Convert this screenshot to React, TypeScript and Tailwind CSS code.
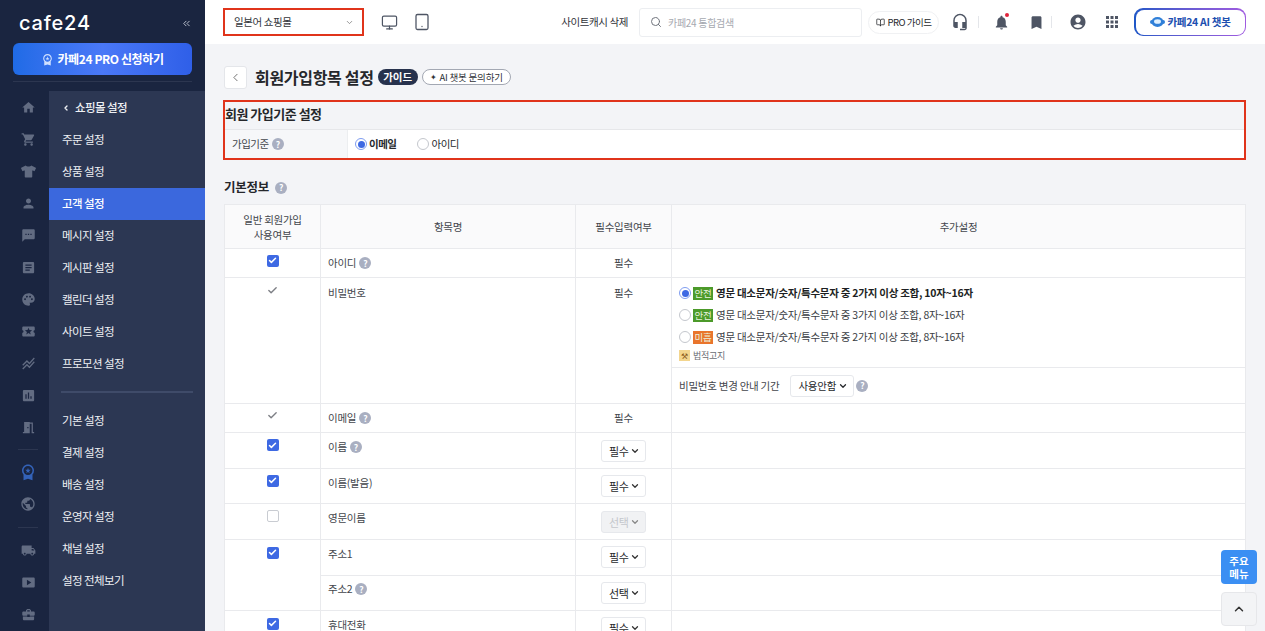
import React from "react";
import { MdHome, MdShoppingCart, MdPerson, MdSms, MdPalette, MdStackedLineChart, MdAssessment, MdLocalShipping, MdSmartDisplay, MdBusinessCenter, MdArticle, MdLocalActivity, MdMeetingRoom, MdNotifications, MdBookmark, MdAccountCircle, MdApps, MdHeadsetMic, MdPublic, MdWorkspacePremium } from "react-icons/md";
import { FaTshirt } from "react-icons/fa";
import { ChevronDown, ChevronLeft, ChevronUp, ChevronsLeft, Search, Check, Monitor, Tablet, BookOpen } from "lucide-react";

const font = "font-['Noto_Sans_CJK_KR','Noto_Sans',sans-serif]";

const Help = ({ className = "" }: { className?: string }) => (
  <span className={`inline-flex h-[12px] w-[12px] items-center justify-center rounded-full bg-[#a9afc1] text-[8.5px] font-bold leading-none text-white ${className}`}>?</span>
);

const CheckBox = ({ state }: { state: "on" | "off" | "fixed" }) => {
  if (state === "fixed") return <Check className="mx-auto h-[11px] w-[11px] text-[#7d7f85]" strokeWidth={3} />;
  if (state === "off") return <span className="mx-auto block h-[12px] w-[12px] rounded-[2px] border border-[#c9ccd2] bg-white" />;
  return (
    <span className="mx-auto flex h-[12px] w-[12px] items-center justify-center rounded-[2px] bg-[#3e69e3]">
      <Check className="h-[9px] w-[9px] text-white" strokeWidth={4} />
    </span>
  );
};

const Radio = ({ on }: { on?: boolean }) =>
  on ? (
    <span className="flex h-[12px] w-[12px] shrink-0 items-center justify-center rounded-full border border-[#7f9df0] bg-white">
      <span className="h-[7px] w-[7px] rounded-full bg-[#3e69e3]" />
    </span>
  ) : (
    <span className="block h-[12px] w-[12px] shrink-0 rounded-full border border-[#c4c7cd] bg-white" />
  );

const Sel = ({ label, disabled }: { label: string; disabled?: boolean }) => (
  <span className={`mx-auto flex h-[22px] w-[45px] items-center justify-between rounded-[3px] border border-[#e6e8ec] pl-[7px] pr-[5px] text-[11px] ${disabled ? "bg-[#f1f2f4] text-[#c4c7cc]" : "bg-white text-[#26282c]"}`}>
    {label}
    <ChevronDown className={`h-[10px] w-[10px] ${disabled ? "text-[#888]" : "text-[#333]"}`} strokeWidth={3} />
  </span>
);

const railTop = [MdHome, MdShoppingCart, FaTshirt, MdPerson, MdSms, MdArticle, MdPalette, MdLocalActivity, MdStackedLineChart, MdAssessment, MdMeetingRoom];
const railBottom = [MdLocalShipping, MdSmartDisplay, MdBusinessCenter];
const menu1 = ["주문 설정", "상품 설정", "고객 설정", "메시지 설정", "게시판 설정", "캘린더 설정", "사이트 설정", "프로모션 설정"];
const menu2 = ["기본 설정", "결제 설정", "배송 설정", "운영자 설정", "채널 설정", "설정 전체보기"];

const RailIcon = ({ I }: { I: React.ComponentType<{ className?: string }> }) => (
  <span className="flex h-[32px] w-full shrink-0 items-center justify-center"><I className="h-[15px] w-[15px] text-[#626c82]" /></span>
);

const Sidebar = () => (
  <aside className="flex h-full w-[205px] shrink-0 flex-col bg-[#1a2540]">
    <div className="flex h-[43px] shrink-0 items-center justify-between pl-[19px] pr-[13px] pt-[3px]">
      <span className="font-['Inter',sans-serif] text-[20px] font-medium leading-none tracking-[0.8px] text-white">cafe24</span>
      <ChevronsLeft className="h-[11px] w-[11px] text-[#c5cad6]" />
    </div>
    <div className="mx-[13px] flex h-[32px] shrink-0 items-center justify-center gap-[3px] rounded-[6px] bg-gradient-to-r from-[#1f6be6] via-[#4a78f7] to-[#2f5fe8] text-[12px] font-bold tracking-[-0.4px] text-white">
      <MdWorkspacePremium className="h-[13px] w-[13px] text-[#cfe0ff]" />
      카페24 PRO 신청하기
    </div>
    <div className="mx-[13px] mt-[6px] h-px shrink-0 bg-[#2c3650]" />
    <div className="mt-[9px] flex min-h-0 flex-1">
      <div className="flex w-[49px] shrink-0 flex-col items-center pl-[7px]">
        {railTop.map((I, i) => <RailIcon key={i} I={I} />)}
        <span className="mt-[6px] h-px w-[20px] shrink-0 bg-[#2c3650]" />
        <span className="mt-[6px] flex h-[32px] w-full shrink-0 items-center justify-center"><MdWorkspacePremium className="h-[18px] w-[18px] text-[#3362b8]" /></span>
        <span className="flex h-[32px] w-full shrink-0 items-center justify-center"><MdPublic className="h-[16px] w-[16px] text-[#626c82]" /></span>
        <span className="mb-[6px] mt-[7px] h-px w-[20px] shrink-0 bg-[#2c3650]" />
        {railBottom.map((I, i) => <RailIcon key={i} I={I} />)}
      </div>
      <nav className="flex-1 bg-[#2c3753] pt-[1px] text-[11.5px] tracking-[-0.6px] text-[#eef0f4]">
        <div className="flex h-[32px] items-center pl-[13px] font-medium">
          <ChevronLeft className="mr-[5px] h-[8px] w-[8px]" strokeWidth={4} />
          쇼핑몰 설정
        </div>
        {menu1.map((m) => (
          <div key={m} className={`flex h-[32px] items-center pl-[13px] ${m === "고객 설정" ? "bg-[#3b68dd] font-medium text-white" : ""}`}>{m}</div>
        ))}
        <div className="mx-[12px] mb-[12.5px] mt-[10.5px] h-[2px] bg-[#3f4b69]" />
        {menu2.map((m) => (
          <div key={m} className="flex h-[32px] items-center pl-[13px]">{m}</div>
        ))}
      </nav>
    </div>
  </aside>
);

const TopBar = () => (
  <header className="flex h-[44px] shrink-0 items-center bg-white pl-[18px] pr-[19px]">
    <div className="flex h-[28px] w-[141px] items-center justify-between border-2 border-[#e0341b] pl-[9px] pr-[8px] text-[10.5px] tracking-[-0.4px] text-[#33363b]">
      일본어 쇼핑몰
      <ChevronDown className="h-[9px] w-[9px] text-[#777]" />
    </div>
    <Monitor className="ml-[17px] h-[17px] w-[17px] text-[#4e5564]" strokeWidth={1.7} />
    <Tablet className="ml-[15px] h-[18px] w-[18px] text-[#4e5564]" strokeWidth={1.7} />
    <span className="ml-auto text-[10.5px] tracking-[-0.4px] text-[#2f3238]">사이트캐시 삭제</span>
    <div className="ml-[11px] flex h-[29px] w-[223px] items-center rounded-[3px] border border-[#eceef1] bg-white pl-[10px] text-[10px] tracking-[-0.3px] text-[#a6a9b0]">
      <Search className="mr-[6px] h-[12px] w-[12px] text-[#70747d]" />
      카페24 통합검색
    </div>
    <div className="ml-[6px] flex h-[23px] w-[71px] items-center justify-center gap-[3px] rounded-full border border-[#f0f1f3] text-[9.5px] tracking-[-0.5px] text-[#26282c]">
      <BookOpen className="h-[9px] w-[9px]" />
      PRO 가이드
    </div>
    <MdHeadsetMic className="ml-[12px] h-[18px] w-[18px] text-[#4e5564]" />
    <span className="ml-[9px] h-[12px] w-px bg-[#e4e6ea]" />
    <span className="relative ml-[14px]">
      <MdNotifications className="h-[17px] w-[17px] text-[#4e5564]" />
      <span className="absolute right-[1px] top-[-1px] h-[4px] w-[4px] rounded-full bg-[#e0243c]" />
    </span>
    <MdBookmark className="ml-[18px] h-[17px] w-[17px] text-[#4e5564]" />
    <span className="ml-[6px] h-[12px] w-px bg-[#e4e6ea]" />
    <MdAccountCircle className="ml-[17px] h-[18px] w-[18px] text-[#4e5564]" />
    <MdApps className="ml-[16px] h-[18px] w-[18px] text-[#4e5564]" />
    <div className="ml-[13px] rounded-[9px] bg-gradient-to-r from-[#1d57c7] to-[#a05be0] p-[1.5px]">
      <div className="flex h-[25px] w-[109px] items-center justify-center gap-[3px] rounded-[8px] bg-white text-[10.5px] font-bold tracking-[-0.3px] text-[#1d4fb0]">
        <svg width="15" height="12" viewBox="0 0 15 12"><ellipse cx="7.5" cy="6" rx="6" ry="5" fill="#2f7fd8" /><rect x="0" y="4" width="15" height="4" rx="2" fill="#2f7fd8" /><ellipse cx="7.5" cy="5.5" rx="3.5" ry="2.3" fill="#dff0ff" /></svg>
        카페24 AI 챗봇
      </div>
    </div>
  </header>
);

const td = "border border-[#e9eaed]";
const Name = ({ children, help }: { children: React.ReactNode; help?: boolean }) => (
  <span className="flex items-center gap-[3px]">{children}{help && <Help />}</span>
);

const PwOption = ({ on, tag, color, text }: { on?: boolean; tag: string; color: string; text: string }) => (
  <div className={`flex h-[22px] items-center gap-[2px] ${on ? "font-bold text-[#1d1f23]" : "text-[#3a3d43]"}`}>
    <Radio on={on} />
    <span className={`flex h-[13px] w-[20px] items-center justify-center text-[9.5px] font-normal text-[#e9f3df] ${color}`}>{tag}</span>
    <span className="ml-[1px]">{text}</span>
  </div>
);

const MainTable = () => (
  <table className="w-[1022px] table-fixed border-collapse bg-white text-[10.5px] tracking-[-0.25px] text-[#43464c]">
    <colgroup>
      <col className="w-[96px]" /><col className="w-[255px]" /><col className="w-[96px]" /><col />
    </colgroup>
    <thead>
      <tr className="h-[44px] bg-[#fafafb] text-center leading-[15px]">
        <th className={`${td} font-normal`}>일반 회원가입<br />사용여부</th>
        <th className={`${td} font-normal`}>항목명</th>
        <th className={`${td} font-normal`}>필수입력여부</th>
        <th className={`${td} font-normal`}>추가설정</th>
      </tr>
    </thead>
    <tbody>
      <tr className="h-[29px]">
        <td className={`${td} pb-[5px] text-center`}><CheckBox state="on" /></td>
        <td className={`${td} pl-[7px]`}><Name help>아이디</Name></td>
        <td className={`${td} text-center`}>필수</td>
        <td className={td} />
      </tr>
      <tr>
        <td className={`${td} pt-[7px] text-center align-top`}><CheckBox state="fixed" /></td>
        <td className={`${td} pl-[7px] pt-[7px] align-top`}>비밀번호</td>
        <td className={`${td} pt-[7px] text-center align-top`}>필수</td>
        <td className={`${td} p-0 align-top`}>
          <div className="flex h-[90px] flex-col border-b border-[#e9eaed] pl-[7px] pt-[4px]">
            <PwOption on tag="안전" color="bg-[#4c9a2a]" text="영문 대소문자/숫자/특수문자 중 2가지 이상 조합, 10자~16자" />
            <PwOption tag="안전" color="bg-[#4c9a2a]" text="영문 대소문자/숫자/특수문자 중 3가지 이상 조합, 8자~16자" />
            <PwOption tag="미흡" color="bg-[#e9752c]" text="영문 대소문자/숫자/특수문자 중 2가지 이상 조합, 8자~16자" />
            <div className="mt-[1px] flex items-center gap-[3px] text-[9px] text-[#6a6d73]">
              <span className="flex h-[11px] w-[11px] items-center justify-center bg-[#f3d58e] text-[8px] leading-none text-[#8a5a1a]">⚒</span>
              법적고지
            </div>
          </div>
          <div className="flex h-[35px] items-center pl-[7px]">
            비밀번호 변경 안내 기간
            <span className="ml-[11px] flex h-[22px] w-[64px] items-center justify-between rounded-[3px] border border-[#e6e8ec] pl-[7px] pr-[5px] text-[#26282c]">
              사용안함
              <ChevronDown className="h-[10px] w-[10px]" strokeWidth={3} />
            </span>
            <Help className="ml-[2px]" />
          </div>
        </td>
      </tr>
      <tr className="h-[29px]">
        <td className={`${td} pb-[5px] text-center`}><CheckBox state="fixed" /></td>
        <td className={`${td} pl-[7px]`}><Name help>이메일</Name></td>
        <td className={`${td} text-center`}>필수</td>
        <td className={td} />
      </tr>
      {[
        { s: "on", n: "이름", h: true, v: "필수" },
        { s: "on", n: "이름(발음)", v: "필수" },
        { s: "off", n: "영문이름", v: "선택", d: true },
      ].map((r) => (
        <tr key={r.n} className="h-[35.6px]">
          <td className={`${td} pb-[10px] text-center`}><CheckBox state={r.s as "on" | "off"} /></td>
          <td className={`${td} pb-[7px] pl-[7px]`}><Name help={r.h}>{r.n}</Name></td>
          <td className={`${td} pt-[1px] text-center`}><Sel label={r.v} disabled={r.d} /></td>
          <td className={td} />
        </tr>
      ))}
      <tr className="h-[36px]">
        <td rowSpan={2} className={`${td} pt-[7px] text-center align-top`}><CheckBox state="on" /></td>
        <td className={`${td} pb-[7px] pl-[7px]`}>주소1</td>
        <td className={`${td} text-center`}><Sel label="필수" /></td>
        <td className={td} />
      </tr>
      <tr className="h-[35px]">
        <td className={`${td} pb-[7px] pl-[7px]`}><Name help>주소2</Name></td>
        <td className={`${td} text-center`}><Sel label="선택" /></td>
        <td className={td} />
      </tr>
      <tr className="h-[36px]">
        <td className={`${td} pb-[9px] text-center`}><CheckBox state="on" /></td>
        <td className={`${td} pb-[7px] pl-[7px]`}>휴대전화</td>
        <td className={`${td} text-center`}><Sel label="필수" /></td>
        <td className={td} />
      </tr>
    </tbody>
  </table>
);

const Content = () => (
  <main className="min-h-0 flex-1 overflow-hidden bg-[#f3f4f7] pl-[19px] pr-[19px] pt-[22px]">
    <div className="flex h-[22px] items-center">
      <span className="flex h-[23px] w-[23px] items-center justify-center rounded-[3px] border border-[#e4e6ea] bg-white">
        <ChevronLeft className="h-[13px] w-[13px] text-[#555]" strokeWidth={1.5} />
      </span>
      <h1 className="ml-[8px] text-[16px] font-bold tracking-[-0.3px] text-[#25272b]">회원가입항목 설정</h1>
      <span className="ml-[4px] flex h-[16px] w-[40px] items-center justify-center rounded-full bg-[#27324d] text-[10.5px] font-bold text-white">가이드</span>
      <span className="ml-[4px] flex h-[16px] w-[89px] items-center justify-center gap-[3px] rounded-full border border-[#a3a8b3] bg-white text-[9.5px] tracking-[-0.2px] text-[#2f3238]">
        <span className="text-[8px] leading-none">✦</span>AI 챗봇 문의하기
      </span>
    </div>
    <section className="ml-[-1px] mt-[12px] h-[60px] w-[1023px] border-2 border-[#e0341b]">
      <h2 className="flex h-[27px] items-center pb-[3px] text-[13px] font-bold tracking-[-0.5px] text-[#25272b]">회원 가입기준 설정</h2>
      <div className="flex h-[29px] border-t border-[#e6e7ea] text-[10.5px] tracking-[-0.5px]">
        <div className="flex w-[123px] items-center gap-[3px] border-r border-[#eceef0] bg-[#f6f7f9] pl-[7px] text-[#43464c]">가입기준<Help /></div>
        <div className="flex flex-1 items-center bg-white pl-[7px] text-[#26282c]">
          <Radio on /><span className="ml-[2px] font-bold">이메일</span>
          <span className="ml-[21px] flex"><Radio /></span><span className="ml-[2px]">아이디</span>
        </div>
      </div>
    </section>
    <h2 className="mt-[19px] flex h-[17px] items-center gap-[6px] text-[12.5px] font-bold tracking-[-0.25px] text-[#25272b]">기본정보<Help /></h2>
    <div className="mt-[8px]"><MainTable /></div>
  </main>
);

export default function App() {
  return (
    <div className={`relative flex h-[631px] w-[1265px] overflow-hidden ${font}`}>
      <Sidebar />
      <div className="flex min-w-0 flex-1 flex-col">
        <TopBar />
        <Content />
      </div>
      <div className="absolute left-[1221px] top-[550px] flex h-[34px] w-[36px] items-center justify-center rounded-[4px] bg-[#3b8ff3] text-center text-[10.5px] font-bold leading-[13px] text-white">주요<br />메뉴</div>
      <div className="absolute left-[1221px] top-[592px] flex h-[34px] w-[36px] items-center justify-center rounded-[4px] border border-[#e6e7ea] bg-[#f3f4f6]">
        <ChevronUp className="h-[14px] w-[14px] text-[#333]" strokeWidth={2.5} />
      </div>
    </div>
  );
}
